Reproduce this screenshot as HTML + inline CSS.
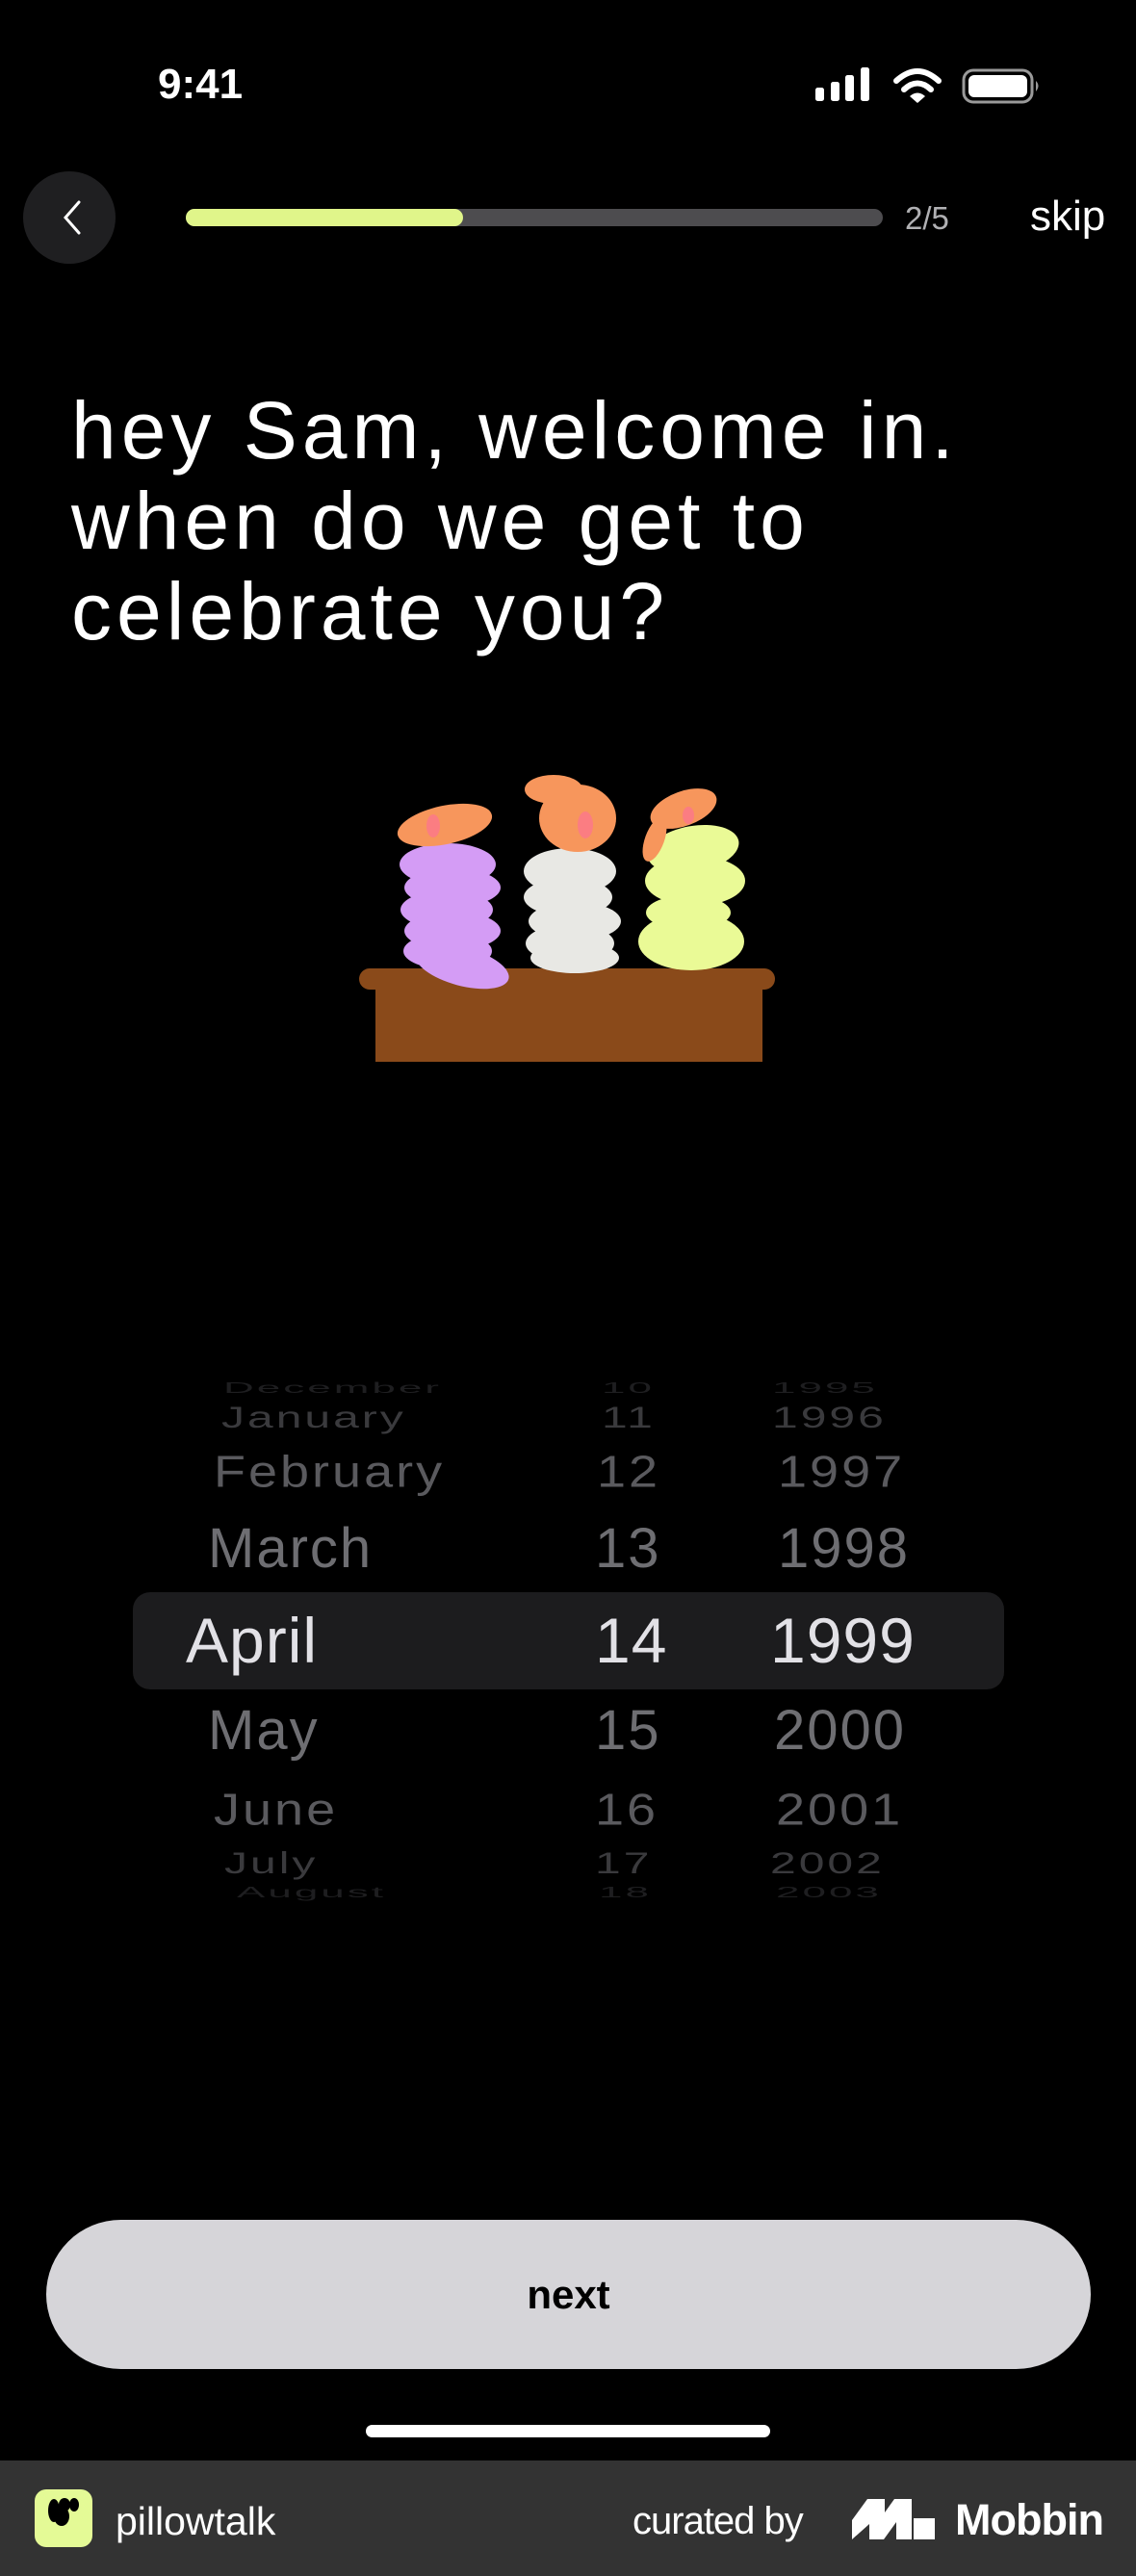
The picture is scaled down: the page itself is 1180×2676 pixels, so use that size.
<!DOCTYPE html>
<html><head><meta charset="utf-8"><style>
*{margin:0;padding:0;box-sizing:border-box}
body{width:1180px;height:2676px;background:#000;position:relative;overflow:hidden;font-family:"Liberation Sans",sans-serif;color:#fff}
.a{position:absolute;white-space:nowrap}
.row{position:absolute;left:0;width:1180px;height:80px;line-height:80px}
.row span{position:absolute;top:0}
</style></head><body>
<div class="a" style="left:164px;top:62px;font-size:44px;font-weight:bold;line-height:52px">9:41</div>
<svg class="a" style="left:840px;top:60px" width="250" height="56" viewBox="840 60 250 56">
<rect x="847" y="91" width="9" height="14" rx="2.5" fill="#fff"/>
<rect x="863" y="85" width="9" height="20" rx="2.5" fill="#fff"/>
<rect x="878" y="78" width="9" height="27" rx="2.5" fill="#fff"/>
<rect x="894" y="70" width="9" height="35" rx="2.5" fill="#fff"/>
<path d="M931 84 Q953 64 975 84" stroke="#fff" stroke-width="6" fill="none" stroke-linecap="round"/>
<path d="M939 93 Q953 80 967 93" stroke="#fff" stroke-width="6" fill="none" stroke-linecap="round"/>
<path d="M945 100 L953 107 L961 100 Q953 93 945 100Z" fill="#fff"/>
<rect x="1001" y="73" width="71" height="33" rx="10" fill="none" stroke="#9a9a9a" stroke-width="3"/>
<rect x="1006" y="78" width="61" height="23" rx="6" fill="#fff"/>
<path d="M1076 84 Q1081 89 1076 95Z" fill="#9a9a9a"/>
</svg>
<div class="a" style="left:24px;top:178px;width:96px;height:96px;border-radius:48px;background:#1f1f21"></div>
<svg class="a" style="left:58px;top:206px" width="30" height="40"><path d="M24 4 L10 20 L24 36" stroke="#fff" stroke-width="3" fill="none" stroke-linecap="round"/></svg>
<div class="a" style="left:193px;top:217px;width:724px;height:18px;border-radius:9px;background:#4d4c4f"></div>
<div class="a" style="left:193px;top:217px;width:288px;height:18px;border-radius:9px;background:#e0f58a"></div>
<div class="a" style="left:940px;top:207px;font-size:33px;line-height:40px;color:#b0b0b3">2/5</div>
<div class="a" style="left:1070px;top:200px;font-size:44px;line-height:50px">skip</div>
<div class="a" style="left:74px;top:400px;font-size:84px;line-height:94px;letter-spacing:5px">hey Sam, welcome in.<br>when do we get to<br>celebrate you?</div>
<svg class="a" style="left:0;top:780px" width="1180" height="340" viewBox="0 780 1180 340">
<g fill="#8a4a1a"><rect x="373" y="1006" width="432" height="22" rx="11"/><rect x="390" y="1020" width="402" height="83"/></g>
<g fill="#d49cf5">
<ellipse cx="465" cy="898" rx="50" ry="22"/><ellipse cx="470" cy="922" rx="50" ry="20"/><ellipse cx="464" cy="945" rx="48" ry="20"/><ellipse cx="470" cy="967" rx="50" ry="20"/><ellipse cx="465" cy="988" rx="46" ry="19"/><ellipse cx="480" cy="1004" rx="50" ry="20" transform="rotate(15 480 1004)"/></g>
<ellipse cx="462" cy="857" rx="50" ry="20" transform="rotate(-12 462 857)" fill="#f7965c"/>
<ellipse cx="450" cy="858" rx="7" ry="12" fill="#fb7d82"/>
<g fill="#e8e8e4">
<ellipse cx="592" cy="905" rx="48" ry="24"/><ellipse cx="590" cy="932" rx="46" ry="20"/><ellipse cx="597" cy="957" rx="48" ry="20"/><ellipse cx="592" cy="980" rx="46" ry="20"/><ellipse cx="597" cy="995" rx="46" ry="16"/></g>
<ellipse cx="600" cy="850" rx="40" ry="35" fill="#f7965c"/>
<ellipse cx="575" cy="820" rx="30" ry="15" fill="#f7965c"/>
<ellipse cx="608" cy="857" rx="8" ry="14" fill="#fb7d82"/>
<g fill="#eafa96">
<ellipse cx="720" cy="882" rx="48" ry="24" transform="rotate(-10 720 882)"/><ellipse cx="722" cy="915" rx="52" ry="26"/><ellipse cx="715" cy="948" rx="44" ry="18"/><ellipse cx="718" cy="978" rx="55" ry="30"/></g>
<ellipse cx="710" cy="840" rx="36" ry="18" transform="rotate(-20 710 840)" fill="#f7965c"/>
<ellipse cx="680" cy="872" rx="10" ry="24" transform="rotate(20 680 872)" fill="#f7965c"/>
<ellipse cx="715" cy="847" rx="6" ry="9" fill="#fb7d82"/>
</svg>
<div class="a" style="left:138px;top:1654px;width:905px;height:101px;border-radius:18px;background:#1c1c1e"></div>
<div class="row" style="top:1402px;color:#1e1e20;font-size:44px;transform:scaleY(.35);letter-spacing:3px"><span style="left:232px">December</span><span style="left:625px">10</span><span style="left:802px">1995</span></div>
<div class="row" style="top:1433px;color:#3a3a3d;font-size:48px;transform:scaleY(.65);letter-spacing:3px"><span style="left:230px">January</span><span style="left:625px">11</span><span style="left:802px">1996</span></div>
<div class="row" style="top:1489px;color:#5a5a5e;font-size:54px;transform:scaleY(.85);letter-spacing:3px"><span style="left:222px">February</span><span style="left:620px">12</span><span style="left:808px">1997</span></div>
<div class="row" style="top:1569px;color:#6e6e72;font-size:58px;letter-spacing:2px"><span style="left:216px">March</span><span style="left:618px">13</span><span style="left:808px">1998</span></div>
<div class="row" style="top:1664px;color:#e2e1e6;font-size:66px;letter-spacing:1px"><span style="left:193px">April</span><span style="left:618px">14</span><span style="left:800px">1999</span></div>
<div class="row" style="top:1758px;color:#6e6e72;font-size:58px;letter-spacing:2px"><span style="left:216px">May</span><span style="left:618px">15</span><span style="left:804px">2000</span></div>
<div class="row" style="top:1840px;color:#5a5a5e;font-size:54px;transform:scaleY(.85);letter-spacing:3px"><span style="left:222px">June</span><span style="left:618px">16</span><span style="left:806px">2001</span></div>
<div class="row" style="top:1896px;color:#3a3a3d;font-size:48px;transform:scaleY(.65);letter-spacing:3px"><span style="left:233px">July</span><span style="left:618px">17</span><span style="left:800px">2002</span></div>
<div class="row" style="top:1926px;color:#1e1e20;font-size:44px;transform:scaleY(.35);letter-spacing:3px"><span style="left:246px">August</span><span style="left:622px">18</span><span style="left:806px">2003</span></div>
<div class="a" style="left:48px;top:2306px;width:1085px;height:155px;border-radius:78px;background:#d6d5d9;color:#000;font-size:42px;font-weight:bold;line-height:155px;text-align:center">next</div>
<div class="a" style="left:380px;top:2519px;width:420px;height:13px;border-radius:7px;background:#fff"></div>
<div class="a" style="left:0;top:2556px;width:1180px;height:120px;background:#333"></div>
<div class="a" style="left:36px;top:2586px;width:60px;height:60px;border-radius:12px;background:#e4fa96"></div>
<svg class="a" style="left:36px;top:2586px" width="60" height="60"><ellipse cx="20" cy="22" rx="6" ry="12"/><ellipse cx="31" cy="16" rx="6" ry="7"/><ellipse cx="41" cy="16" rx="5" ry="7"/><ellipse cx="28" cy="28" rx="8" ry="10"/></svg>
<div class="a" style="left:120px;top:2595px;font-size:41px;line-height:48px">pillowtalk</div>
<div class="a" style="left:657px;top:2595px;font-size:40px;line-height:48px;letter-spacing:-1px">curated by</div>
<svg class="a" style="left:885px;top:2596px" width="90" height="42" viewBox="0 0 90 42"><path d="M0 42 L0 22 L16 0 L34 0 L34 14 L44 0 L62 0 L62 42 L46 42 L46 24 L33 42 L18 42 L18 26 Z" fill="#fff"/><rect x="64" y="20" width="22" height="22" fill="#fff"/></svg>
<div class="a" style="left:992px;top:2593px;font-size:45px;font-weight:bold;line-height:50px;letter-spacing:-1px">Mobbin</div>
</body></html>
